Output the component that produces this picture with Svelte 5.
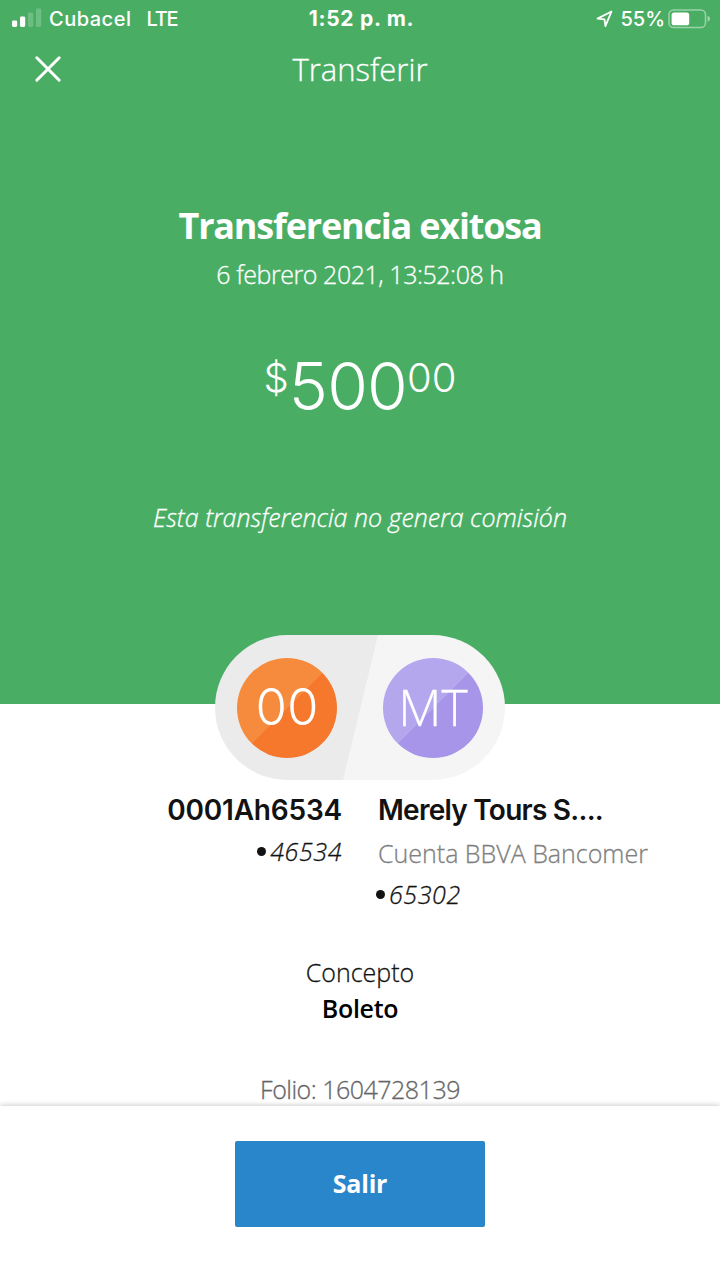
<script lang="ts">
    type Party = {
        initials: string;
        name: string;
        bank?: string;
        account: string;
        tone: 'orange' | 'purple';
    }

    const origin: Party = {initials: '00', name: '0001Ah6534', account: '46534', tone: 'orange'};
    const target: Party = {
        initials: 'MT',
        name: 'Merely Tours S....',
        bank: 'Cuenta BBVA Bancomer',
        account: '65302',
        tone: 'purple'
    };

    let {onclose = () => {}}: { onclose?: () => void } = $props();
</script>

<div class="screen">
    <section class="hero">
        <div class="status">
            <div class="status-left">
                <svg class="signal" width="30" height="20" viewBox="0 0 30 20" fill="#fff">
                    <rect x="0" y="12.5" width="5.2" height="6.5" rx="1.4"/>
                    <rect x="8" y="8.5" width="5.2" height="10.5" rx="1.4"/>
                    <rect x="16" y="4.5" width="5.2" height="14.5" rx="1.4" opacity="0.2"/>
                    <rect x="24" y="0.5" width="5.2" height="18.5" rx="1.4" opacity="0.2"/>
                </svg>
                <span class="carrier">Cubacel</span>
                <span class="network">LTE</span>
            </div>
            <div class="clock">1:52 p. m.</div>
            <div class="status-right">
                <svg class="location" width="18" height="18" viewBox="0 0 18 18" fill="none" stroke="#fff" stroke-width="1.8" stroke-linejoin="round">
                    <path d="M15.5 1.5 1.5 8.6l7 .7.9 6.8z"/>
                </svg>
                <span class="percent">55%</span>
                <svg class="battery" width="43" height="20" viewBox="0 0 43 20">
                    <rect x="1" y="1" width="36.5" height="17.6" rx="4.6" fill="none" stroke="#fff" stroke-opacity="0.45" stroke-width="1.5"/>
                    <rect x="3.6" y="3.5" width="17.6" height="12.8" rx="2.6" fill="#fff"/>
                    <path d="M39.6 6.8c1.5.5 2.3 1.6 2.3 3s-.8 2.5-2.3 3z" fill="#fff" fill-opacity="0.5"/>
                </svg>
            </div>
        </div>

        <header class="nav">
            <button class="close" onclick={onclose} aria-label="Cerrar">
                <svg width="28" height="28" viewBox="0 0 28 28" stroke="#fff" stroke-width="3" stroke-linecap="round">
                    <path d="M2.8 2.8l22.4 22.4M25.2 2.8L2.8 25.2"/>
                </svg>
            </button>
            <span class="nav-title">Transferir</span>
        </header>

        <h1>Transferencia exitosa</h1>
        <p class="date">6 febrero 2021, 13:52:08 h</p>
        <div class="amount">
            <span class="currency">$</span><span class="units">500</span><span class="cents">00</span>
        </div>
        <p class="note">Esta transferencia no genera comisión</p>
    </section>

    <div class="pill">
        {#each [origin, target] as party}
            <div class="avatar {party.tone}"><span>{party.initials}</span></div>
        {/each}
    </div>

    <section class="parties">
        <div class="party from">
            <div class="name">{origin.name}</div>
            <div class="account"><i class="dot"></i><span>{origin.account}</span></div>
        </div>
        <div class="party to">
            <div class="name">{target.name}</div>
            <div class="bank">{target.bank}</div>
            <div class="account"><i class="dot"></i><span>{target.account}</span></div>
        </div>
    </section>

    <section class="details">
        <div class="label">Concepto</div>
        <div class="value">Boleto</div>
        <div class="folio">Folio: 1604728139</div>
    </section>

    <footer>
        <button class="exit" onclick={onclose}>Salir</button>
    </footer>
</div>

<style>
    :global(body) {
        margin: 0;
        background: #fff;
    }

    .screen {
        width: 720px;
        height: 1280px;
        overflow: hidden;
        display: flex;
        flex-direction: column;
        background: #fff;
        color: #121212;
        font-family: "Open Sans", "Noto Sans", sans-serif;
        font-size: 25px;
        line-height: 36px;
        font-weight: 300;
        white-space: nowrap;
    }

    .hero {
        flex: none;
        height: 704px;
        display: flex;
        flex-direction: column;
        background: #49ae64;
        color: #fff;
        text-align: center;
    }

    .status {
        flex: none;
        height: 37px;
        display: grid;
        grid-template-columns: 1fr auto 1fr;
        align-items: center;
        padding: 0 9px 0 12px;
        font-family: Inter, sans-serif;
        font-size: 20px;
        font-weight: 500;
    }

    .status-left,
    .status-right {
        display: flex;
        align-items: center;
    }

    .status-right {
        justify-content: flex-end;
    }

    .signal {
        margin-top: -2px;
    }

    .carrier {
        margin-left: 7px;
        letter-spacing: 0.5px;
    }

    .network {
        margin-left: 15px;
        letter-spacing: -1.2px;
    }

    .clock {
        font-size: 21px;
        font-weight: 700;
        letter-spacing: 0.7px;
    }

    .percent {
        margin: 0 3px 0 6px;
    }

    /* Light weight needs a slight thickening at these sizes */
    .nav-title,
    .date,
    .note,
    .account,
    .bank,
    .label,
    .folio,
    .purple {
        -webkit-text-stroke: 0.3px currentColor;
    }

    .nav {
        flex: none;
        height: 64px;
        display: grid;
        grid-template-columns: 1fr auto 1fr;
        align-items: center;
        padding: 0 34px;
    }

    .close {
        display: flex;
        justify-self: start;
        padding: 0;
        border: none;
        background: none;
        cursor: pointer;
    }

    .nav-title {
        font-size: 31px;
        line-height: 44px;
    }

    h1 {
        margin: 101px 0 0;
        font-size: 36px;
        font-weight: 700;
        line-height: 48px;
        letter-spacing: -1.2px;
    }

    p {
        margin: 0;
    }

    .date {
        margin-top: 6px;
        letter-spacing: -0.45px;
    }

    .amount {
        display: flex;
        justify-content: center;
        align-items: flex-start;
        height: 80px;
        margin-top: 54px;
        font-family: Inter, sans-serif;
        font-weight: 300;
    }

    .units {
        font-size: 66px;
        line-height: 80px;
        letter-spacing: -0.8px;
    }

    .currency,
    .cents {
        font-size: 40px;
        line-height: 64px;
    }

    .note {
        margin-top: 73px;
        font-style: italic;
    }

    .pill {
        flex: none;
        align-self: center;
        z-index: 1;
        box-sizing: border-box;
        width: 290px;
        height: 145px;
        margin-top: -69px;
        padding: 0 22px;
        display: flex;
        align-items: center;
        justify-content: space-between;
        border-radius: 73px;
        background: linear-gradient(103.6deg, #ebebeb 50%, #f5f5f5 50.3%);
    }

    .avatar {
        display: flex;
        align-items: center;
        justify-content: center;
        width: 100px;
        height: 100px;
        border-radius: 50%;
        color: #fff;
        font-size: 50px;
    }

    .avatar span {
        margin-top: -2px;
    }

    .orange {
        background: linear-gradient(135deg, #f78b3d 50%, #f5782c 50.5%);
        font-family: Inter, sans-serif;
        font-size: 51px;
    }

    .purple {
        background: linear-gradient(135deg, #b5a7ed 50%, #a695e8 50.5%);
    }

    .parties {
        display: grid;
        grid-template-columns: 1fr 1fr;
        column-gap: 36px;
        margin-top: 10px;
    }

    .from {
        text-align: right;
    }

    .name {
        font-family: Inter, sans-serif;
        font-size: 28px;
        font-weight: 600;
        line-height: 40px;
    }

    .from .name {
        letter-spacing: -0.2px;
    }

    .to .name {
        letter-spacing: -0.75px;
    }

    .account {
        display: flex;
        align-items: center;
        gap: 4px;
        font-style: italic;
        letter-spacing: 0.6px;
    }

    .from .account {
        justify-content: flex-end;
        margin-top: 3px;
    }

    .to .account {
        margin: 5px 0 0 -2px;
    }

    .dot {
        width: 9px;
        height: 9px;
        border-radius: 50%;
        background: #121212;
    }

    .bank {
        margin-top: 5px;
        color: #808080;
    }

    .details {
        flex: 1;
        min-height: 0;
        margin-top: 42px;
        text-align: center;
    }

    .value {
        font-weight: 600;
        color: #000;
        letter-spacing: -0.3px;
    }

    .folio {
        margin-top: 45px;
        color: #666;
        letter-spacing: -0.5px;
    }

    footer {
        flex: none;
        z-index: 1;
        box-sizing: border-box;
        height: 174px;
        padding-top: 35px;
        background: #fff;
        box-shadow: 0 -1px 5px rgba(0, 0, 0, 0.2);
        text-align: center;
    }

    .exit {
        display: block;
        width: 250px;
        height: 86px;
        margin: 0 auto;
        padding: 0 0 2px;
        border: none;
        border-radius: 2px;
        background: #2a86ca;
        color: #fff;
        font: inherit;
        font-weight: 700;
        letter-spacing: -0.2px;
        cursor: pointer;
    }
</style>
